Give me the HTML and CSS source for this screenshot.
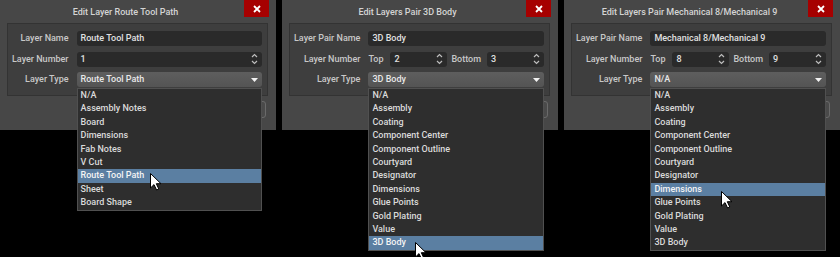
FILE: index.html
```html
<!DOCTYPE html>
<html>
<head>
<meta charset="utf-8">
<title>Edit Layers</title>
<link rel="stylesheet" href="styles.css">
</head>
<body>
<div class="dlg">
  <div class="titlebar">
    <div class="title">Edit Layer Route Tool Path</div>
    <div class="close"><svg width="8" height="8" viewBox="0 0 8 8"><path d="M1 1 L7 7 M7 1 L1 7" stroke="#fff" stroke-width="1.8"/></svg></div>
  </div>
  <div class="group">
    <div class="lbl">Layer Name</div>
    <div class="field">Route Tool Path</div>
    <div class="lbl">Layer Number</div>
    <div class="field spin"><span class="val">1</span><svg class="chev" width="7" height="14" viewBox="0 0 7 14"><path d="M1 5 L3.5 2.5 L6 5 M1 9 L3.5 11.5 L6 9" fill="none" stroke="#bdbdbd" stroke-width="1.2"/></svg></div>
    <div class="lbl">Layer Type</div>
    <div class="combo"><span class="val">Route Tool Path</span><svg class="arrow" width="7" height="4" viewBox="0 0 7 4"><path d="M0 0 H7 L3.5 4 Z" fill="#f2f2f2"/></svg>
      <ul class="list">
        <li>N/A</li>
        <li>Assembly Notes</li>
        <li>Board</li>
        <li>Dimensions</li>
        <li>Fab Notes</li>
        <li>V Cut</li>
        <li class="sel">Route Tool Path<svg class="cursor c1" width="12" height="18" viewBox="0 0 12 18"><path d="M0.5 0.5 V15 L4 11.6 L6.6 17 L8.8 16 L6.3 10.7 L11 10.7 Z" fill="#fff" stroke="#000" stroke-width="1"/></svg></li>
        <li>Sheet</li>
        <li>Board Shape</li>
      </ul>
    </div>
  </div>
  <div class="footer"><div class="btn"></div><div class="btn"></div></div>
</div>

<div class="dlg">
  <div class="titlebar">
    <div class="title">Edit Layers Pair 3D Body</div>
    <div class="close"><svg width="8" height="8" viewBox="0 0 8 8"><path d="M1 1 L7 7 M7 1 L1 7" stroke="#fff" stroke-width="1.8"/></svg></div>
  </div>
  <div class="group">
    <div class="lbl">Layer Pair Name</div>
    <div class="field">3D Body</div>
    <div class="lbl">Layer Number</div>
    <div class="pair">
      <span class="sub top">Top</span>
      <div class="field spin"><span class="val">2</span><svg class="chev" width="7" height="14" viewBox="0 0 7 14"><path d="M1 5 L3.5 2.5 L6 5 M1 9 L3.5 11.5 L6 9" fill="none" stroke="#bdbdbd" stroke-width="1.2"/></svg></div>
      <span class="sub bottom">Bottom</span>
      <div class="field spin"><span class="val">3</span><svg class="chev" width="7" height="14" viewBox="0 0 7 14"><path d="M1 5 L3.5 2.5 L6 5 M1 9 L3.5 11.5 L6 9" fill="none" stroke="#bdbdbd" stroke-width="1.2"/></svg></div>
    </div>
    <div class="lbl">Layer Type</div>
    <div class="combo"><span class="val">3D Body</span><svg class="arrow" width="7" height="4" viewBox="0 0 7 4"><path d="M0 0 H7 L3.5 4 Z" fill="#f2f2f2"/></svg>
      <ul class="list">
        <li>N/A</li>
        <li>Assembly</li>
        <li>Coating</li>
        <li>Component Center</li>
        <li>Component Outline</li>
        <li>Courtyard</li>
        <li>Designator</li>
        <li>Dimensions</li>
        <li>Glue Points</li>
        <li>Gold Plating</li>
        <li>Value</li>
        <li class="sel">3D Body<svg class="cursor c2" width="12" height="18" viewBox="0 0 12 18"><path d="M0.5 0.5 V15 L4 11.6 L6.6 17 L8.8 16 L6.3 10.7 L11 10.7 Z" fill="#fff" stroke="#000" stroke-width="1"/></svg></li>
      </ul>
    </div>
  </div>
  <div class="footer"><div class="btn"></div><div class="btn"></div></div>
</div>

<div class="dlg">
  <div class="titlebar">
    <div class="title">Edit Layers Pair Mechanical 8/Mechanical 9</div>
    <div class="close"><svg width="8" height="8" viewBox="0 0 8 8"><path d="M1 1 L7 7 M7 1 L1 7" stroke="#fff" stroke-width="1.8"/></svg></div>
  </div>
  <div class="group">
    <div class="lbl">Layer Pair Name</div>
    <div class="field">Mechanical 8/Mechanical 9</div>
    <div class="lbl">Layer Number</div>
    <div class="pair">
      <span class="sub top">Top</span>
      <div class="field spin"><span class="val">8</span><svg class="chev" width="7" height="14" viewBox="0 0 7 14"><path d="M1 5 L3.5 2.5 L6 5 M1 9 L3.5 11.5 L6 9" fill="none" stroke="#bdbdbd" stroke-width="1.2"/></svg></div>
      <span class="sub bottom">Bottom</span>
      <div class="field spin"><span class="val">9</span><svg class="chev" width="7" height="14" viewBox="0 0 7 14"><path d="M1 5 L3.5 2.5 L6 5 M1 9 L3.5 11.5 L6 9" fill="none" stroke="#bdbdbd" stroke-width="1.2"/></svg></div>
    </div>
    <div class="lbl">Layer Type</div>
    <div class="combo"><span class="val">N/A</span><svg class="arrow" width="7" height="4" viewBox="0 0 7 4"><path d="M0 0 H7 L3.5 4 Z" fill="#f2f2f2"/></svg>
      <ul class="list">
        <li>N/A</li>
        <li>Assembly</li>
        <li>Coating</li>
        <li>Component Center</li>
        <li>Component Outline</li>
        <li>Courtyard</li>
        <li>Designator</li>
        <li class="sel">Dimensions<svg class="cursor c3" width="12" height="18" viewBox="0 0 12 18"><path d="M0.5 0.5 V15 L4 11.6 L6.6 17 L8.8 16 L6.3 10.7 L11 10.7 Z" fill="#fff" stroke="#000" stroke-width="1"/></svg></li>
        <li>Glue Points</li>
        <li>Gold Plating</li>
        <li>Value</li>
        <li>3D Body</li>
      </ul>
    </div>
  </div>
  <div class="footer"><div class="btn"></div><div class="btn"></div></div>
</div>
</body>
</html>
```

FILE: styles.css
```css
html, body {
  margin: 0;
  padding: 0;
}
body {
  background: #000;
  width: 840px;
  height: 257px;
  overflow: hidden;
  display: flex;
  align-items: flex-start;
  gap: 6px;
  font-family: Roboto, "Noto Sans", "Liberation Sans", sans-serif;
  font-size: 9px;
  font-weight: 500;
  color: #d6d6d6;
}
.dlg {
  width: 276px;
  height: 130px;
  background: #474747;
  position: relative;
  box-sizing: border-box;
  flex: none;
}
.titlebar {
  display: flex;
  align-items: flex-start;
  height: 23px;
}
.title {
  flex: 1;
  text-align: center;
  padding-left: 7px;
  line-height: 24px;
  color: #d4d4d4;
  white-space: nowrap;
}
.close {
  width: 25px;
  height: 17px;
  margin-right: 7px;
  background: #a60000;
  display: flex;
  align-items: center;
  justify-content: center;
}
.group {
  margin: 0 8px 0 7px;
  height: 73px;
  box-sizing: border-box;
  background: #3e3e3e;
  border: 1px solid #333333;
  padding: 7px 5px 0 4px;
  display: grid;
  grid-template-columns: auto 1fr;
  grid-auto-rows: 15px;
  column-gap: 8px;
  row-gap: 5.5px;
}
.lbl {
  text-align: right;
  line-height: 15px;
  color: #c8c8c8;
  white-space: nowrap;
}
.field {
  background: #2a2a2a;
  border-radius: 3px;
  padding-left: 4px;
  line-height: 15px;
  color: #e0e0e0;
  display: flex;
  align-items: center;
  white-space: nowrap;
  min-width: 0;
}
.field .val, .combo .val {
  flex: 1;
}
.chev {
  margin-right: 4px;
}
.pair {
  display: flex;
  align-items: center;
}
.pair .field {
  flex: 1;
  height: 15px;
}
.sub {
  color: #c8c8c8;
  line-height: 15px;
}
.sub.top {
  margin-right: 7px;
}
.sub.bottom {
  margin: 0 6px 0 4px;
}
.combo {
  position: relative;
  background: linear-gradient(#5e5e5e, #545454);
  border-radius: 3px;
  padding-left: 4px;
  line-height: 15px;
  color: #e8e8e8;
  display: flex;
  align-items: center;
}
.arrow {
  margin-right: 4px;
}
.list {
  position: absolute;
  left: 0;
  right: 0;
  top: 16px;
  margin: 0;
  padding: 0;
  list-style: none;
  background: #2e2e2e;
  border: 1px solid #505050;
  z-index: 2;
}
.list li {
  height: 13.4px;
  line-height: 13.4px;
  padding-left: 3px;
  color: #dadada;
  position: relative;
  white-space: nowrap;
}
.list li.sel {
  background: #5b7fa2;
  color: #f4f4f4;
}
.cursor {
  position: absolute;
  z-index: 3;
}
.c1 { left: 72px; top: 4px; }
.c2 { left: 46px; top: 6px; }
.c3 { left: 70px; top: 8px; }
.footer {
  display: flex;
  justify-content: flex-end;
  gap: 5px;
  padding: 5px 10px 0 0;
}
.btn {
  width: 60px;
  height: 17px;
  box-sizing: border-box;
  border: 1px solid #6a6a6a;
  border-radius: 3px;
  background: #4a4a4a;
}
```
